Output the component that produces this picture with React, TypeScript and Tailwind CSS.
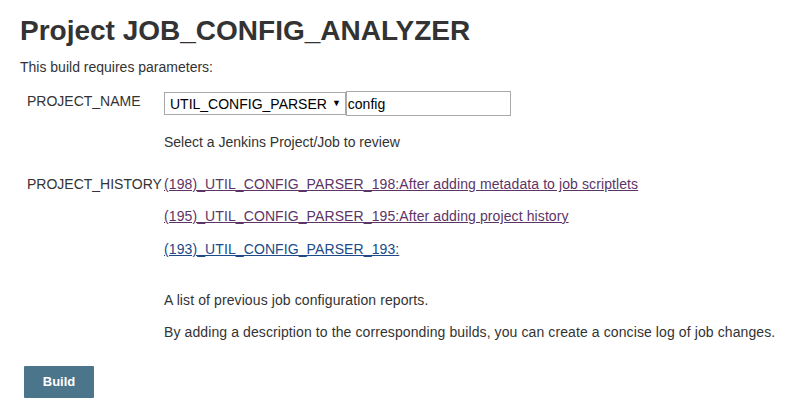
import React from 'react';

const history = [
  { label: '(198)_UTIL_CONFIG_PARSER_198:After adding metadata to job scriptlets', visited: true },
  { label: '(195)_UTIL_CONFIG_PARSER_195:After adding project history', visited: true },
  { label: '(193)_UTIL_CONFIG_PARSER_193:', visited: false },
];

export default function App() {
  return (
    <div className="min-h-[420px] bg-white px-5 pt-[14px] text-[14px] text-[#333] font-['Liberation_Sans',Arial,sans-serif]">
      <h1 className="text-[28px] font-bold leading-[34px] text-[#333]">Project JOB_CONFIG_ANALYZER</h1>
      <p className="mt-[11px] leading-[16px]">This build requires parameters:</p>

      <div className="ml-[7px] mt-[17px]">
        <div className="flex">
          <div className="w-[137px] shrink-0 pt-[1px] leading-[16px]">PROJECT_NAME</div>
          <div>
            <div className="flex items-start">
              <div className="flex h-[23px] items-center gap-[5px] border border-[#a9a9a9] bg-white pl-[5px] pr-[4px] text-[14px] leading-none text-black">
                <span>UTIL_CONFIG_PARSER</span>
                <span className="text-[9px]">▼</span>
              </div>
              <input
                readOnly
                value="config"
                className="-mt-[1px] h-[25px] w-[165px] border border-[#a9a9a9] px-[1px] text-[14px] text-black outline-none"
              />
            </div>
            <div className="mt-[18px] leading-[16px]">Select a Jenkins Project/Job to review</div>
          </div>
        </div>

        <div className="mt-[26px] flex">
          <div className="w-[137px] shrink-0 leading-[16px]">PROJECT_HISTORY</div>
          <div className="whitespace-nowrap tracking-[0.1px]">
            <div className="flex flex-col gap-[16px]">
              {history.map((h, i) => (
                <a
                  key={h.label}
                  href="#"
                  className={
                    'leading-[16px] underline ' +
                    (i === 2 ? 'mt-[1px] ' : '') +
                    (h.visited ? 'text-[#5c3566]' : 'text-[#204a87]')
                  }
                >
                  {h.label}
                </a>
              ))}
            </div>
            <div className="mt-[35px] leading-[16px]">A list of previous job configuration reports.</div>
            <div className="mt-[16px] leading-[16px]">
              By adding a description to the corresponding builds, you can create a concise log of job changes.
            </div>
          </div>
        </div>
      </div>

      <button className="ml-[4px] mt-[26px] h-[32px] w-[70px] rounded-[1px] bg-[#4b758b] text-[13px] font-bold text-white">
        Build
      </button>
    </div>
  );
}
